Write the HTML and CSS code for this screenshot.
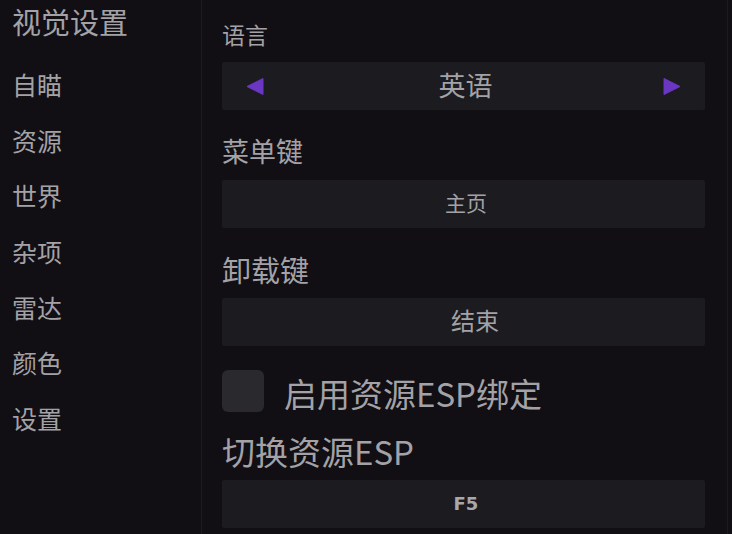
FILE: index.html
```html
<!DOCTYPE html>
<html lang="zh-CN">
<head>
<meta charset="utf-8">
<title>视觉设置</title>
<link rel="stylesheet" href="styles.css">
</head>
<body>
<div class="app">
  <aside class="sidebar">
    <div class="title">视觉设置</div>
    <nav class="nav">
      <div class="nav-item">自瞄</div>
      <div class="nav-item">资源</div>
      <div class="nav-item">世界</div>
      <div class="nav-item">杂项</div>
      <div class="nav-item">雷达</div>
      <div class="nav-item">颜色</div>
      <div class="nav-item">设置</div>
    </nav>
  </aside>
  <main class="content">
    <div class="label label-first label-sm">语言</div>
    <div class="box combo">
      <svg class="arrow" width="18" height="18" viewBox="0 0 18 18"><polygon points="1,9.5 17,1.5 17,17.5" fill="#6a36c2" stroke="#6a36c2" stroke-width="1" stroke-linejoin="round"/></svg>
      <span class="combo-text">英语</span>
      <svg class="arrow" width="18" height="18" viewBox="0 0 18 18"><polygon points="17,9.5 1,1.5 1,17.5" fill="#6a36c2" stroke="#6a36c2" stroke-width="1" stroke-linejoin="round"/></svg>
    </div>
    <div class="label label-md">菜单键</div>
    <div class="box button"><span class="btn-text">主页</span></div>
    <div class="label label-lg">卸载键</div>
    <div class="box button"><span class="btn-text btn-text-lg">结束</span></div>
    <div class="check-row">
      <div class="checkbox"></div>
      <span class="check-text">启用资源ESP绑定</span>
    </div>
    <div class="label label-xl">切换资源ESP</div>
    <div class="box button"><span class="btn-key">F5</span></div>
  </main>
  <div class="edge"></div>
</div>
</body>
</html>
```

FILE: styles.css
```css
html, body {
  margin: 0;
  padding: 0;
  background: #110e14;
}
body {
  width: 732px;
  height: 534px;
  overflow: hidden;
  font-family: "Noto Sans CJK SC", "Noto Sans", sans-serif;
  color: #a3a2a6;
}
.app {
  display: flex;
  height: 534px;
}
.sidebar {
  width: 189px;
  padding-left: 12px;
  border-right: 1px solid #1c1a20;
  flex-shrink: 0;
}
.title {
  font-size: 29px;
  line-height: 42px;
  height: 42px;
}
.nav {
  margin-top: 15px;
  display: flex;
  flex-direction: column;
}
.nav-item {
  font-size: 25px;
  line-height: 55.7px;
  height: 55.7px;
}
.content {
  width: 483px;
  padding-left: 20px;
  padding-right: 22px;
  display: flex;
  flex-direction: column;
  flex-shrink: 0;
}
.edge {
  width: 1px;
  background: #1c1a20;
  flex-shrink: 0;
}
.label {
  height: 30px;
  line-height: 30px;
  margin-top: 25.5px;
  margin-bottom: 14.5px;
  white-space: nowrap;
}
.label-first {
  margin-top: 19px;
  margin-bottom: 13px;
}
.label-sm { font-size: 23px; }
.label-md { font-size: 27px; }
.label-lg { font-size: 29px; }
.label-xl {
  font-size: 33px;
  height: 34px;
  line-height: 34px;
  margin-top: 21px;
  margin-bottom: 12px;
}
.box {
  height: 48px;
  background: #1c1b20;
  border-radius: 2px;
  display: flex;
  align-items: center;
  flex-shrink: 0;
}
.combo {
  justify-content: space-between;
  padding: 0 24px 0 24px;
}
.arrow {
  display: block;
}
.combo-text {
  font-size: 27px;
  line-height: 1;
  padding-bottom: 4px;
  padding-left: 4px;
}
.button {
  justify-content: center;
  padding-left: 5px;
}
.btn-text {
  font-size: 21px;
  line-height: 1;
  padding-bottom: 4px;
}
.btn-text-lg {
  font-size: 24px;
  padding-left: 18px;
}
.btn-key {
  font-family: "DejaVu Sans", sans-serif;
  font-weight: bold;
  font-size: 18px;
  line-height: 1;
  color: #a8a7ab;
}
.check-row {
  margin-top: 22px;
  height: 45px;
  display: flex;
  align-items: center;
}
.checkbox {
  width: 42px;
  height: 42px;
  border-radius: 6px;
  background: #2a292e;
  flex-shrink: 0;
}
.check-text {
  margin-left: 20px;
  font-size: 33px;
  line-height: 1;
  padding-top: 6px;
  white-space: nowrap;
}
```
